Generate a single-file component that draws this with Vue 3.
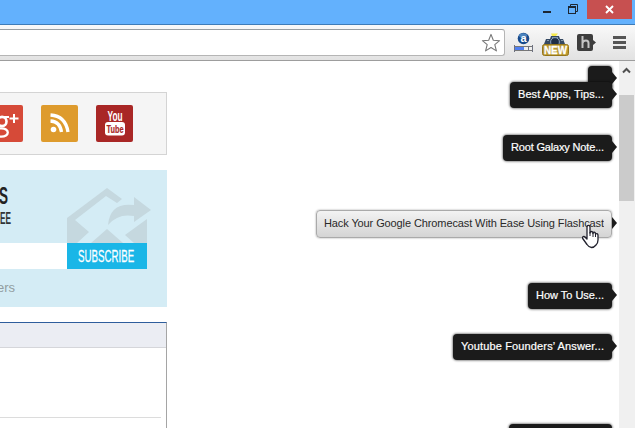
<script setup>
const labels = [
  { text: '', gap: 5, height: 26, width: 24 },
  { text: 'Best Apps, Tips...', gap: -10, height: 26, width: 102 },
  { text: 'Root Galaxy Note...', gap: 27, height: 26, width: 109 },
  { text: 'Hack Your Google Chromecast With Ease Using Flashcast', gap: 49, height: 28, width: 296, active: true },
  { text: 'How To Use...', gap: 45, height: 26, width: 84 },
  { text: 'Youtube Founders’ Answer...', gap: 25, height: 26, width: 159 },
  { text: '', gap: 64, height: 26, width: 103 },
]
</script>

<template>
  <div class="window">
    <header class="titlebar">
      <svg class="controls" width="48" height="24" viewBox="0 0 48 24">
        <rect x="3" y="11" width="8" height="2" fill="#1c2733" />
        <path d="M30.500 6.500V4.500H37.500V11.500H35.500" fill="none" stroke="#1c2733" />
        <rect x="28.500" y="6.500" width="7" height="7" fill="none" stroke="#1c2733" />
        <path d="M28 7H36" stroke="#1c2733" stroke-width="2" />
      </svg>
      <div class="close">
        <svg width="9" height="9" viewBox="0 0 9 9"><path d="M1 1L8 8M8 1L1 8" stroke="#fff" stroke-width="1.900" /></svg>
      </div>
    </header>

    <div class="toolbar">
      <div class="address">
        <svg width="20" height="20" viewBox="0 0 20 20">
          <path d="M10 1.400L12.300 7.300L18.600 7.700L13.800 11.700L15.400 17.900L10 14.500L4.600 17.900L6.200 11.700L1.400 7.700L7.700 7.300Z" fill="#fff" stroke="#777" stroke-width="1.100" stroke-linejoin="round" />
        </svg>
      </div>
      <svg class="extensions" width="130" height="35" viewBox="505 25 130 35">
        <circle cx="523.500" cy="38.500" r="5.800" fill="#174a8c" />
        <ellipse cx="523" cy="35.500" rx="4" ry="2.300" fill="#4c83bd" />
        <text x="523.500" y="42" text-anchor="middle" class="alexa">a</text>
        <rect x="514.500" y="46.500" width="18" height="4" fill="#eee" stroke="#777" />
        <rect x="515" y="47" width="9" height="3" fill="#507ff0" />
        <path d="M514.500 45V52M532.500 45V52M528.500 46V51" stroke="#6d7180" />

        <path d="M551 33.500H558L556 36H552Z" fill="#f6e94b" />
        <path d="M544 44L546 39H550L551 36H559L560 39H563L565 44V47H544Z" fill="#354963" />
        <path d="M552 37.500H558M547 40.500H549M561 40.500H563" stroke="#8799ac" />
        <circle cx="555" cy="42" r="4.400" fill="#1e2e45" stroke="#8ba1bb" />
        <rect x="542.500" y="44.500" width="26" height="11" rx="2" fill="#b99832" stroke="#967619" />
        <text x="555.500" y="54" text-anchor="middle" textLength="23" lengthAdjust="spacingAndGlyphs" class="new">NEW</text>

        <path d="M579 34H591Q593 34 593 36V40L596 42.500L593 45V49Q593 51 591 51H579Q577 51 577 49V36Q577 34 579 34Z" fill="#3d3d3d" />
        <path d="M582.500 36V48M582.500 43Q583 40.500 586 40.500Q588.500 40.500 588.500 43V48" fill="none" stroke="#c4c4c4" stroke-width="2" />
        <path d="M613 37.500H626M613 42.500H626M613 47.500H626" stroke="#555" stroke-width="3" />
      </svg>
    </div>

    <main class="page">
      <aside class="sidebar">
        <section class="social">
          <svg class="tile google" width="23" height="37" viewBox="0 0 23 37">
            <g fill="none" stroke="#fff">
              <ellipse cx="2" cy="16.500" rx="4.500" ry="4.600" stroke-width="2.600" />
              <path d="M2 12H9" stroke-width="2" />
              <ellipse cx="1.500" cy="27.500" rx="6.300" ry="4.200" stroke-width="2.300" />
              <path d="M9.500 13.500H18.500M14 9V18" stroke-width="2" />
            </g>
          </svg>
          <svg class="tile rss" width="37" height="37" viewBox="0 0 37 37">
            <circle cx="12.500" cy="24.500" r="2.800" fill="#fff" />
            <path d="M9.500 16Q19 16.500 20.500 27M9.500 10Q24.500 11 27 27" fill="none" stroke="#fff" stroke-width="3.300" />
          </svg>
          <svg class="tile youtube" width="37" height="37" viewBox="0 0 37 37">
            <text x="11.500" y="16" textLength="15" lengthAdjust="spacingAndGlyphs" class="you">You</text>
            <rect x="9" y="17" width="20" height="13.500" rx="3" fill="#fff" />
            <text x="10.500" y="28" textLength="17" lengthAdjust="spacingAndGlyphs" class="tube">Tube</text>
          </svg>
        </section>

        <section class="newsletter">
          <svg class="headline" width="167" height="73" viewBox="0 0 167 73">
            <g fill="#c5d8df">
              <path d="M67 48L107 18L122 29L117 33L106 26L75 50L89 62L77 73H67Z" />
              <path d="M108 54Q110 31 134 34V26L151 39L134 51V45Q118 42 108 54Z" transform="translate(0 1)" />
              <path d="M91 73L107 59L123 73ZM125 65L147 49V73H134Z" />
            </g>
            <text x="-1" y="34" textLength="9" lengthAdjust="spacingAndGlyphs" class="heading">S</text>
            <text x="0" y="54" textLength="11" lengthAdjust="spacingAndGlyphs" class="subheading">EE</text>
          </svg>
          <div class="signup">
            <div class="email"></div>
            <button class="subscribe">
              <svg width="80" height="26" viewBox="0 0 80 26">
                <text transform="translate(11 19) scale(0.567 1)" textLength="99" lengthAdjust="spacingAndGlyphs">SUBSCRIBE</text>
              </svg>
            </button>
          </div>
          <p class="readers">ers</p>
        </section>

        <section class="panel">
          <div class="panel-head"></div>
          <div class="panel-row"></div>
        </section>
      </aside>

      <div class="labels">
        <div
          v-for="(label, i) in labels"
          :key="i"
          class="label"
          :class="{ active: label.active }"
          :style="{ marginTop: label.gap + 'px', height: label.height + 'px', width: label.width + 'px' }"
        >
          <svg v-if="label.text" :width="label.width - 16" height="16">
            <text x="0" y="11" :textLength="label.width - 16" lengthAdjust="spacing">{{ label.text }}</text>
          </svg>
        </div>
        <svg class="cursor" width="18" height="25" viewBox="0 0 18 25">
          <path d="M6 15V3Q6 1.300 7.500 1.300Q9 1.300 9 3V9Q9 7.500 10.500 7.500Q12 7.500 12 9.500Q12 8 13.300 8.200Q14.500 8.500 14.500 10Q17 9 17 11.500V16Q17 19 15 21Q13 23.500 10.500 23.500Q8 23.500 6 20.500L1.700 14.500Q1 12.500 3 12.500Q4 12.700 6 15Z" fill="#fff" stroke="#20202c" stroke-width="1.300" stroke-linejoin="round" />
          <path d="M9 8V12M12 9V13M14.500 10V13" stroke="#20202c" />
        </svg>
      </div>

      <div class="scrollbar">
        <div class="arrow">
          <svg width="9" height="7" viewBox="0 0 9 7"><path d="M1 5.500L4.500 2L8 5.500" fill="none" stroke="#505050" stroke-width="2" /></svg>
        </div>
        <div class="thumb"></div>
      </div>
    </main>
  </div>
</template>

<style>
body {
  margin: 0;
  overflow: hidden;
}
</style>

<style scoped>
.window {
  width: 635px;
  height: 428px;
  overflow: hidden;
  display: flex;
  flex-direction: column;
  background: #fff;
  font-family: "Liberation Sans", Arial, sans-serif;
}
.window * {
  box-sizing: border-box;
}
svg {
  display: block;
  flex: none;
}
.titlebar {
  height: 25px;
  flex: none;
  display: flex;
  justify-content: flex-end;
  background: #63b1fd;
  border-bottom: 1px solid #3e7cb8;
  padding-right: 3px;
}
.controls {
  margin-left: auto;
  margin-right: -1px;
}
.close {
  width: 45px;
  height: 19px;
  background: #c75050;
  display: flex;
  align-items: center;
  justify-content: center;
}
.toolbar {
  height: 36px;
  flex: none;
  display: flex;
  background: linear-gradient(#f9f9f9, #e2e2e2);
  border-bottom: 1px solid #9d9d9d;
}
.address {
  width: 505px;
  height: 27px;
  margin-top: 4px;
  display: flex;
  align-items: center;
  justify-content: flex-end;
  padding-right: 3px;
  background: #fff;
  border: 1px solid #b5b5b5;
  border-left: 0;
  border-top-color: #999fa3;
  border-radius: 0 3px 3px 0;
}
.alexa {
  font: bold 11px "Liberation Sans", sans-serif;
  fill: #fff;
}
.new {
  font: bold 10px "Liberation Sans", sans-serif;
  fill: #fff;
  stroke: #fff;
  stroke-width: 0.3px;
}
.page {
  height: 367px;
  display: flex;
}
.sidebar {
  width: 167px;
  padding-top: 31px;
}
.social {
  height: 63px;
  display: flex;
  gap: 18px;
  padding-top: 12px;
  background: #f5f5f5;
  border: 1px solid #d4d4d4;
  border-left: 0;
}
.tile {
  border-radius: 2px;
}
.google {
  background: #d64a38;
  border-radius: 0 2px 2px 0;
}
.rss {
  background: #de9b2d;
}
.youtube {
  background: #a92726;
}
.you {
  font: bold 14px "Liberation Sans", sans-serif;
  fill: #fff;
}
.tube {
  font: bold 11px "Liberation Sans", sans-serif;
  fill: #a92726;
  stroke: #a92726;
  stroke-width: 0.2px;
}
.newsletter {
  height: 137px;
  margin-top: 15px;
  background: #d4ecf5;
}
.heading {
  font: bold 23px "Liberation Sans", sans-serif;
  fill: #222;
}
.subheading {
  font: bold 17px "Liberation Sans", sans-serif;
  fill: #303437;
}
.signup {
  height: 26px;
  display: flex;
}
.email {
  width: 67px;
  background: #fff;
}
.subscribe {
  width: 80px;
  height: 26px;
  padding: 0;
  border: 0;
  background: #1ab6e7;
}
.subscribe text {
  font: 16px "Liberation Sans", sans-serif;
  fill: #fff;
  stroke: #fff;
  stroke-width: 0.25px;
}
.readers {
  margin: 11px 0 0 -3px;
  font-size: 13px;
  line-height: 16px;
  color: #929da0;
}
.panel {
  height: 120px;
  margin-top: 15px;
  border-top: 1px solid #2e5d9c;
  border-right: 1px solid #a5a5a5;
}
.panel-head {
  height: 25px;
  background: #ebedf3;
  border-bottom: 1px solid #d5d6da;
}
.panel-row {
  height: 70px;
  margin-right: 5px;
  border-bottom: 1px solid #dcdcdc;
}
.labels {
  position: relative;
  flex: 1;
  display: flex;
  flex-direction: column;
  align-items: flex-end;
  padding-right: 7px;
}
.label {
  position: relative;
  flex: none;
  display: flex;
  align-items: center;
  justify-content: center;
  background: #1b1b1b;
  border-radius: 4px;
  box-shadow: 0 0 2px 1px rgba(0, 0, 0, 0.4);
}
.label text {
  font: 11px "Liberation Sans", Arial, sans-serif;
  fill: #fff;
  stroke: #fff;
  stroke-width: 0.2px;
}
.label::after {
  content: "";
  position: absolute;
  right: -5px;
  top: calc(50% - 7px);
  border: 6px solid transparent;
  border-left: 5px solid #1b1b1b;
  border-right: 0;
}
.label.active {
  background: linear-gradient(#f3f3f3, #d4d4d4);
  border: 1px solid #aaa;
  box-shadow: 0 0 2px rgba(0, 0, 0, 0.4);
}
.label.active::after {
  right: -6px;
}
.label.active text {
  fill: #292929;
  stroke: none;
}
.cursor {
  position: absolute;
  left: 414px;
  top: 163px;
}
.scrollbar {
  width: 16px;
  background: #f0f0f0;
}
.arrow {
  height: 34px;
  padding: 6px 0 0 3px;
}
.thumb {
  width: 15px;
  height: 106px;
  background: #cbcbcb;
}
</style>
